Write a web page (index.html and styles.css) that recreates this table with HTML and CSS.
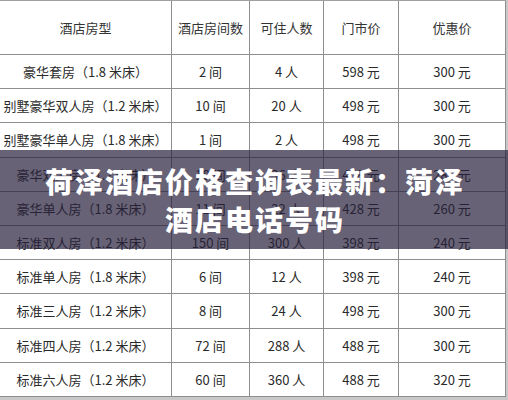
FILE: index.html
```html
<!DOCTYPE html>
<html lang="zh-CN">
<head>
<meta charset="utf-8">
<title>荷泽酒店价格查询表</title>
<link rel="stylesheet" href="styles.css">
</head>
<body>
<div class="page">
  <div class="table">
    <div class="row head">
      <div class="cell">酒店房型</div><div class="cell">酒店房间数</div><div class="cell">可住人数</div><div class="cell">门市价</div><div class="cell">优惠价</div>
    </div>
    <div class="row"><div class="cell">豪华套房（1.8 米床）</div><div class="cell">2 间</div><div class="cell">4 人</div><div class="cell">598 元</div><div class="cell">300 元</div></div>
    <div class="row"><div class="cell">别墅豪华双人房（1.2 米床）</div><div class="cell">10 间</div><div class="cell">20 人</div><div class="cell">498 元</div><div class="cell">300 元</div></div>
    <div class="row"><div class="cell">别墅豪华单人房（1.8 米床）</div><div class="cell">1 间</div><div class="cell">2 人</div><div class="cell">498 元</div><div class="cell">300 元</div></div>
    <div class="row"><div class="cell">豪华双人房（1.2 米床）</div><div class="cell">18 间</div><div class="cell">36 人</div><div class="cell">458 元</div><div class="cell">280 元</div></div>
    <div class="row"><div class="cell">豪华单人房（1.8 米床）</div><div class="cell">11 间</div><div class="cell">22 人</div><div class="cell">428 元</div><div class="cell">260 元</div></div>
    <div class="row"><div class="cell">标准双人房（1.2 米床）</div><div class="cell">150 间</div><div class="cell">300 人</div><div class="cell">398 元</div><div class="cell">240 元</div></div>
    <div class="row"><div class="cell">标准单人房（1.8 米床）</div><div class="cell">6 间</div><div class="cell">12 人</div><div class="cell">398 元</div><div class="cell">240 元</div></div>
    <div class="row"><div class="cell">标准三人房（1.2 米床）</div><div class="cell">8 间</div><div class="cell">24 人</div><div class="cell">498 元</div><div class="cell">300 元</div></div>
    <div class="row"><div class="cell">标准四人房（1.2 米床）</div><div class="cell">72 间</div><div class="cell">288 人</div><div class="cell">488 元</div><div class="cell">300 元</div></div>
    <div class="row"><div class="cell">标准六人房（1.2 米床）</div><div class="cell">60 间</div><div class="cell">360 人</div><div class="cell">488 元</div><div class="cell">320 元</div></div>
  </div>
  <div class="banner">
    <h1 class="title">荷泽酒店价格查询表最新：菏泽<br>酒店电话号码</h1>
  </div>
</div>
</body>
</html>
```

FILE: styles.css
```css
html, body {
  margin: 0;
  padding: 0;
  background: #ffffff;
}

body {
  width: 508px;
  height: 400px;
  overflow: hidden;
  font-family: "Noto Sans CJK SC", "Noto Sans", sans-serif;
  color: #2a2a2a;
}

.page {
  position: relative;
  width: 508px;
  height: 400px;
  background: #c8c8c8;
}

.table {
  width: 506px;
  border-top: 1px solid #a0a0a0;
  background: #ffffff;
}

.row {
  display: grid;
  grid-template-columns: 172px 78px 74px 75px 107px;
  height: 34.2px;
  box-sizing: border-box;
  border-bottom: 1px solid #8e8e8e;
}

.row.head {
  height: 54px;
}

.cell {
  display: flex;
  align-items: center;
  justify-content: center;
  white-space: nowrap;
  font-size: 13px;
  border-right: 1px solid #8e8e8e;
  min-width: 0;
}

.head .cell {
  color: #333333;
}

.banner {
  position: absolute;
  left: 0;
  right: 0;
  top: 150px;
  height: 99px;
  background: rgba(38, 31, 58, 0.7);
  display: flex;
  align-items: center;
  justify-content: center;
}

.title {
  margin: 0;
  color: #ffffff;
  font-size: 28px;
  font-weight: 900;
  letter-spacing: 2px;
  line-height: 38px;
  text-align: center;
  padding-left: 2px;
}
```
